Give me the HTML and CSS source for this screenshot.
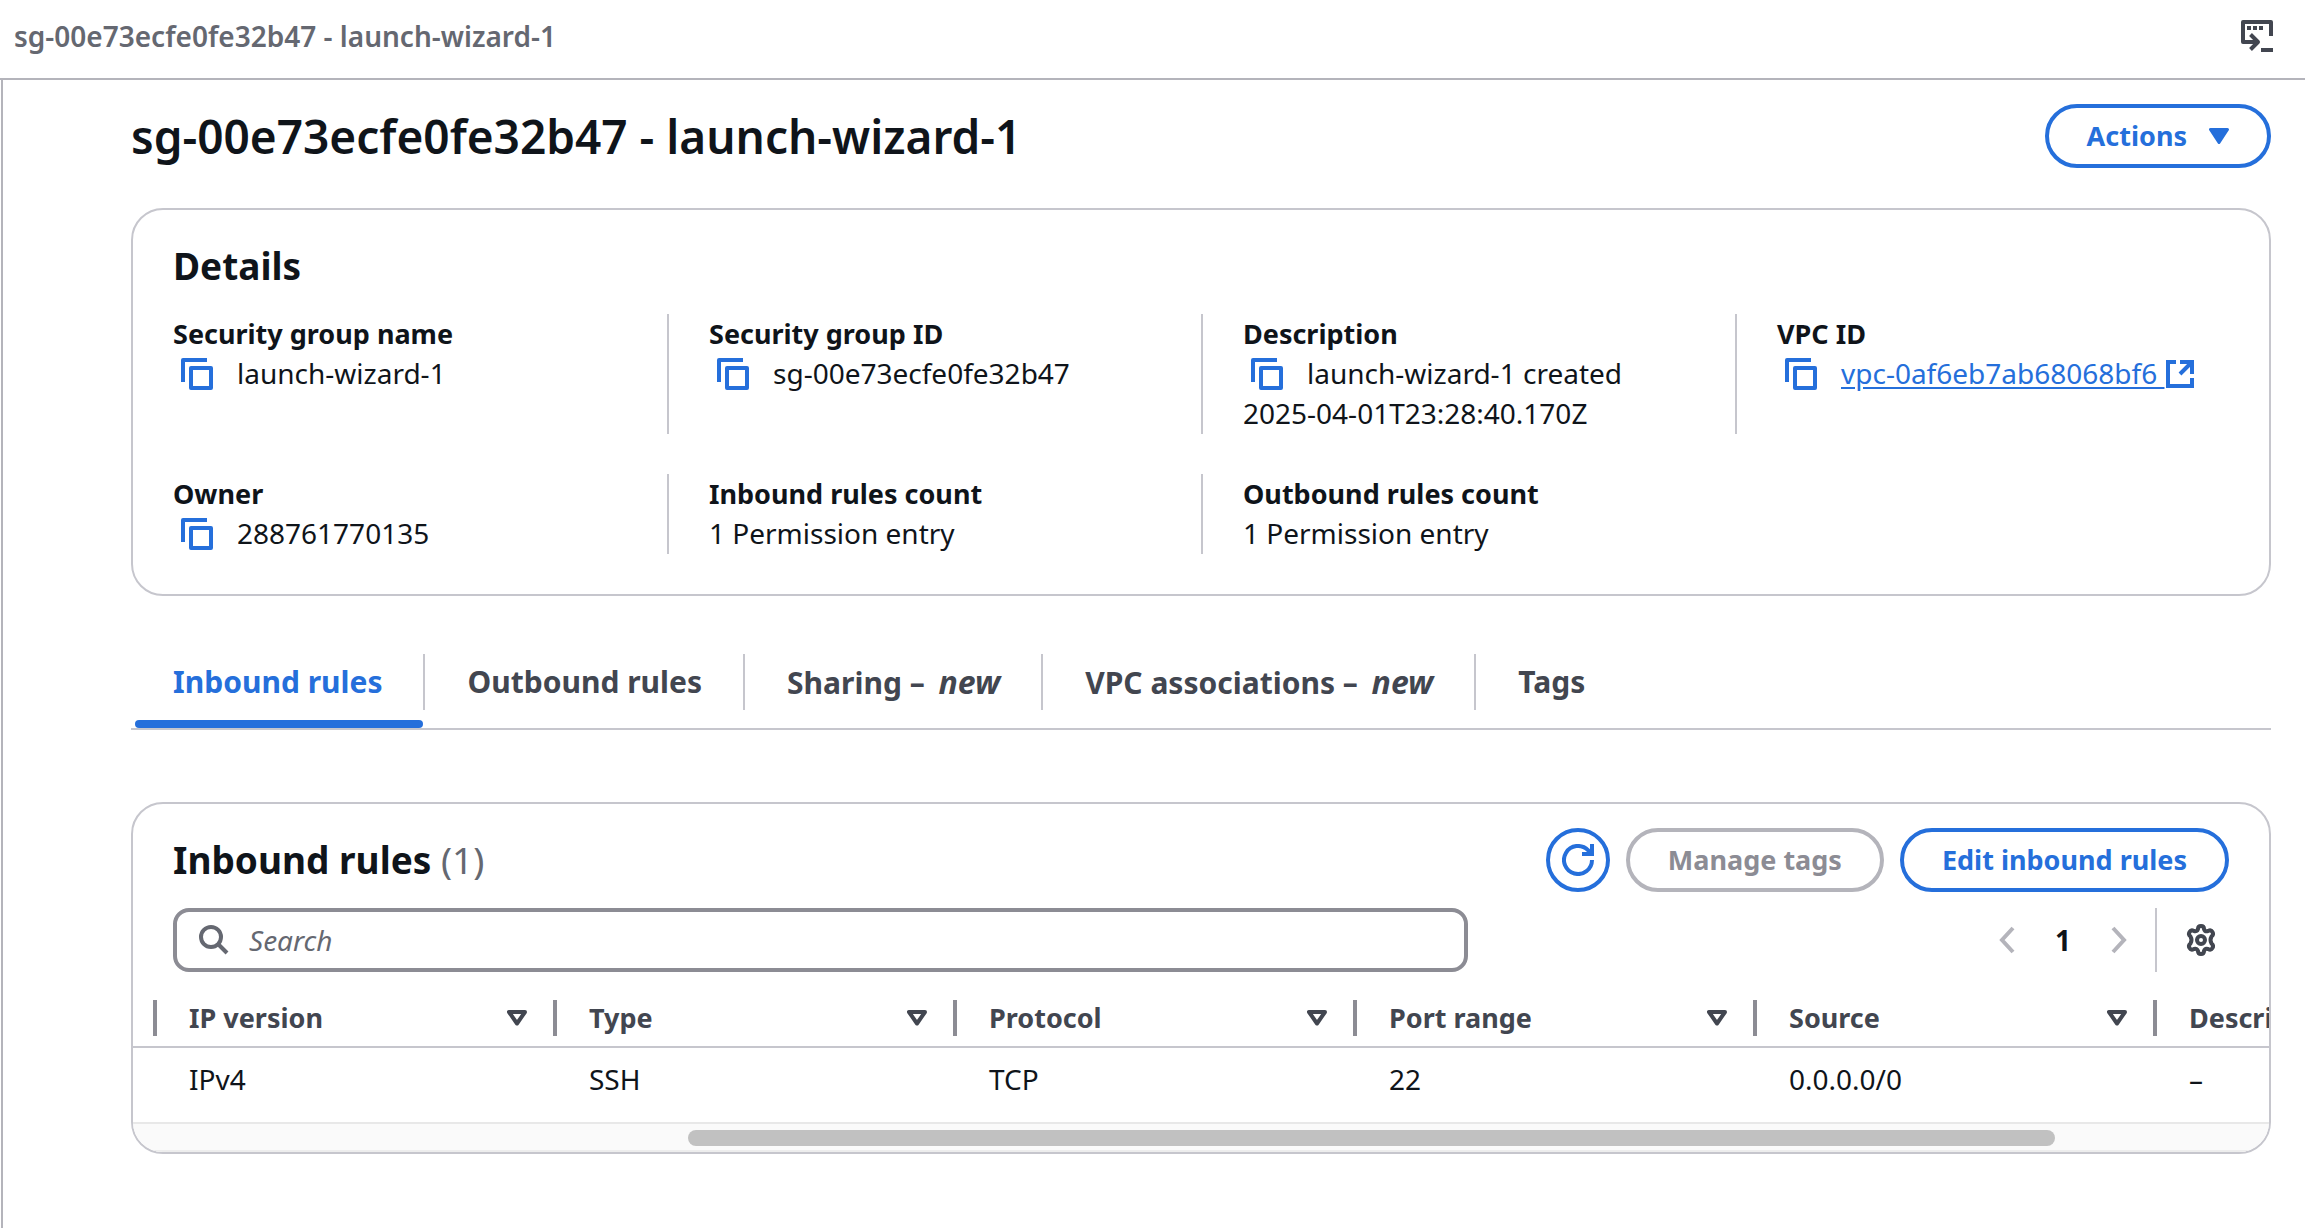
FILE: index.html
```html
<!DOCTYPE html>
<html lang="en">
<head>
<meta charset="utf-8">
<title>sg-00e73ecfe0fe32b47 - launch-wizard-1</title>
<link rel="stylesheet" href="styles.css">
</head>
<body>
<svg class="sprite" aria-hidden="true">
  <symbol id="copy" viewBox="0 0 32 32"><path d="M2 24V2h24" fill="none" stroke="currentColor" stroke-width="4" stroke-linejoin="round"/><rect x="10" y="10" width="20" height="20" fill="none" stroke="currentColor" stroke-width="4" stroke-linejoin="round"/></symbol>
  <symbol id="sort" viewBox="0 0 20 16"><path d="M2 2h16l-8 11.500z" fill="none" stroke="currentColor" stroke-width="4" stroke-linejoin="round"/></symbol>
</svg>

<header class="topbar">
  <span class="crumb">sg-00e73ecfe0fe32b47 - launch-wizard-1</span>
  <button class="icon-button" aria-label="Open CloudShell">
    <svg width="32" height="32" viewBox="0 0 32 32"><path d="M30 16V2H2v20h14M9.500 14.500L17 22l-7.500 7.500" fill="none" stroke="currentColor" stroke-width="4" stroke-linejoin="round"/><path d="M6 6h4v4H6zM12 6h4v4h-4zM18 6h4v4h-4zM20 28h12v4H20z" fill="currentColor"/></svg>
  </button>
</header>

<main class="content">
  <div class="page-head">
    <h1>sg-00e73ecfe0fe32b47 - launch-wizard-1</h1>
    <button class="btn">Actions
      <svg class="caret" width="20" height="16" viewBox="0 0 20 16"><path d="M1.500 1.500h17L10 14.500z" fill="currentColor" stroke="currentColor" stroke-width="3" stroke-linejoin="round"/></svg>
    </button>
  </div>

  <section class="card details">
    <h2>Details</h2>
    <dl class="facts">
      <div><dt>Security group name</dt><dd><button class="copy" aria-label="Copy name"><svg><use href="#copy"/></svg></button>launch-wizard-1</dd></div>
      <div><dt>Security group ID</dt><dd><button class="copy" aria-label="Copy ID"><svg><use href="#copy"/></svg></button>sg-00e73ecfe0fe32b47</dd></div>
      <div><dt>Description</dt><dd><button class="copy" aria-label="Copy description"><svg><use href="#copy"/></svg></button>launch-wizard-1 created 2025-04-01T23:28:40.170Z</dd></div>
      <div><dt>VPC ID</dt><dd><button class="copy" aria-label="Copy VPC ID"><svg><use href="#copy"/></svg></button><a href="#vpc">vpc-0af6eb7ab68068bf6 <svg class="external" width="28" height="28" viewBox="0 0 28 28"><path d="M10 2H2v24h24v-8M14 2h12v12M25 3L14 14" fill="none" stroke="currentColor" stroke-width="4"/></svg></a></dd></div>
      <div><dt>Owner</dt><dd><button class="copy" aria-label="Copy owner"><svg><use href="#copy"/></svg></button>288761770135</dd></div>
      <div><dt>Inbound rules count</dt><dd>1 Permission entry</dd></div>
      <div><dt>Outbound rules count</dt><dd>1 Permission entry</dd></div>
    </dl>
  </section>

  <nav class="tabs">
    <button class="tab active">Inbound rules</button>
    <button class="tab">Outbound rules</button>
    <button class="tab">Sharing – <i>new</i></button>
    <button class="tab">VPC associations – <i>new</i></button>
    <button class="tab">Tags</button>
  </nav>

  <section class="card rules">
    <div class="rules-head">
      <h2>Inbound rules <span class="count">(1)</span></h2>
      <div class="actions">
        <button class="btn round" aria-label="Refresh">
          <svg width="32" height="32" viewBox="0 0 32 32"><path d="M30 16a14 14 0 1 1-4-9.800L29 9.500M30 0v10H20" fill="none" stroke="currentColor" stroke-width="4"/></svg>
        </button>
        <button class="btn" disabled>Manage tags</button>
        <button class="btn">Edit inbound rules</button>
      </div>
    </div>
    <div class="tools">
      <label class="search">
        <svg width="30" height="30" viewBox="0 0 30 30"><circle cx="12" cy="12" r="10" fill="none" stroke="currentColor" stroke-width="4"/><path d="M19 19l9 9" stroke="currentColor" stroke-width="4"/></svg>
        <input type="search" placeholder="Search" aria-label="Search">
      </label>
      <div class="pager">
        <button class="page-step" aria-label="Previous page"><svg width="16" height="28" viewBox="0 0 16 28"><path d="M14 2L3 14l11 12" fill="none" stroke="currentColor" stroke-width="4"/></svg></button>
        <b class="page">1</b>
        <button class="page-step" aria-label="Next page"><svg width="16" height="28" viewBox="0 0 16 28"><path d="M2 2l11 12L2 26" fill="none" stroke="currentColor" stroke-width="4"/></svg></button>
        <button class="settings" aria-label="Preferences"><svg width="32" height="32" viewBox="0 0 32 32"><path d="M13 5q0-3 3-3q3 0 3 3q1 3 4 2q3-1.500 4.500 1q1.500 2.500-1 4.500q-2 3.500 0 7q2.500 2 1 4.500q-1.500 2.500-4.500 1q-3-1-4 2q0 3-3 3q-3 0-3-3q-1-3-4-2q-3 1.500-4.500-1q-1.500-2.500 1-4.500q2-3.500 0-7q-2.500-2-1-4.500q1.500-2.500 4.500-1q3 1 4-2z" fill="none" stroke="currentColor" stroke-width="4" stroke-linejoin="round"/><circle cx="16" cy="16" r="4" fill="none" stroke="currentColor" stroke-width="4"/></svg></button>
      </div>
    </div>
    <div class="table-view">
      <table>
        <thead><tr>
          <th><div>IP version<svg><use href="#sort"/></svg></div></th>
          <th><div>Type<svg><use href="#sort"/></svg></div></th>
          <th><div>Protocol<svg><use href="#sort"/></svg></div></th>
          <th><div>Port range<svg><use href="#sort"/></svg></div></th>
          <th><div>Source<svg><use href="#sort"/></svg></div></th>
          <th><div>Description<svg><use href="#sort"/></svg></div></th>
        </tr></thead>
        <tbody><tr><td>IPv4</td><td>SSH</td><td>TCP</td><td>22</td><td>0.0.0.0/0</td><td>–</td></tr></tbody>
      </table>
    </div>
    <div class="scrollbar"><div class="thumb"></div></div>
  </section>
</main>
</body>
</html>
```
FILE: styles.css
```css
* { box-sizing: border-box; }

:root {
  --blue: #256fdb;
  --ink: #0f141a;
  --slate: #424650;
  --muted: #656871;
  --line: #c6c6cd;
}

body {
  margin: 0;
  min-height: 100vh;
  display: flex;
  flex-direction: column;
  background: #fff;
  color: var(--ink);
  font: 28px/40px "Noto Sans", "Open Sans", sans-serif;
}

.sprite { display: none; }
svg { display: block; flex: none; }
h1, h2, dl, dd { margin: 0; }
h2, dt, th { font-weight: 700; }
dt, th { font-size: 27px; }
button { font: inherit; color: inherit; background: none; border: 0; padding: 0; }

.topbar {
  display: flex;
  justify-content: space-between;
  align-items: center;
  height: 80px;
  padding: 0 32px 6px 14px;
  border-bottom: 2px solid #b4b4bb;
}
.crumb { color: var(--muted); font-weight: 650; }
.icon-button { color: var(--slate); }

.content {
  flex: 1;
  margin-left: 1px;
  padding: 24px 34px 0 128px;
  border-left: 2px solid #b4b4bb;
}

.page-head {
  display: flex;
  justify-content: space-between;
  align-items: center;
  margin-bottom: 40px;
}
h1 { font-size: 46px; line-height: 60px; font-weight: 650; }
h2 { font-size: 37px; line-height: 48px; }

.btn {
  display: flex;
  align-items: center;
  justify-content: center;
  gap: 22px;
  height: 64px;
  padding: 0 38px;
  border: 4px solid var(--blue);
  border-radius: 32px;
  color: var(--blue);
  font-size: 27px;
  font-weight: 700;
}
.btn:disabled { border-color: #b4b4bb; color: #8c8c94; }
.btn.round { width: 64px; padding: 0; }

.card { border: 2px solid var(--line); border-radius: 32px; overflow: hidden; }

.details { padding: 32px 0 40px; }
.details h2 { padding: 0 40px; margin-bottom: 24px; }
.facts { display: grid; grid-template-columns: repeat(4, 1fr); row-gap: 40px; }
.facts > div { padding: 0 40px 1px; border-left: 2px solid var(--line); }
.facts > div:nth-child(4n + 1) { border-left-color: transparent; padding-left: 38px; }
dt { line-height: 39px; }
.copy { display: inline-block; vertical-align: -6px; margin: 0 24px 0 8px; color: var(--blue); line-height: 0; }
.copy svg { width: 32px; height: 32px; }
a { color: var(--blue); text-underline-offset: 3px; white-space: nowrap; }
.external { display: inline-block; vertical-align: -4px; margin-left: 2px; }

.tabs {
  display: flex;
  margin: 58px 0 72px;
  border-bottom: 2px solid var(--line);
}
.tab {
  position: relative;
  padding: 0 41px 0 42px;
  height: 56px;
  margin-bottom: 18px;
  border-right: 2px solid var(--line);
  color: var(--slate);
  font-size: 30px;
  font-weight: 700;
}
.tab i { margin-left: 6px; font-size: 32px; }
.tab:last-child { border: 0; }
.tab.active { color: var(--blue); }
.tab.active::after {
  content: "";
  position: absolute;
  left: 4px;
  right: 0;
  bottom: -18px;
  height: 8px;
  border-radius: 4px;
  background: var(--blue);
}

.rules-head { display: flex; justify-content: space-between; align-items: center; padding: 24px 40px 16px; }
.count { color: var(--muted); font-weight: 400; }
.actions { display: flex; gap: 16px; }

.tools { display: flex; justify-content: space-between; padding: 0 40px; }
.search {
  display: flex;
  align-items: center;
  gap: 20px;
  width: 63%;
  height: 64px;
  padding: 0 22px;
  border: 4px solid #8c8c94;
  border-radius: 16px;
  color: var(--muted);
}
.search input { flex: 1; min-width: 0; border: 0; outline: 0; padding: 0; font: inherit; background: none; }
.search input::placeholder { color: var(--muted); font-style: italic; opacity: 1; }

.pager { display: flex; align-items: center; }
.page-step { color: #b4b4bb; }
.page { width: 96px; text-align: center; }
.settings {
  display: flex;
  align-items: center;
  height: 64px;
  margin-left: 28px;
  padding: 0 12px 0 28px;
  border-left: 2px solid var(--line);
  color: var(--slate);
}

.table-view { overflow: hidden; }
table { width: 2420px; table-layout: fixed; border-collapse: separate; border-spacing: 0; text-align: left; }
th { width: 400px; padding: 28px 0 10px; color: var(--slate); border-bottom: 2px solid var(--line); }
th:first-child { width: 420px; padding-left: 20px; }
th div {
  display: flex;
  align-items: center;
  justify-content: space-between;
  height: 36px;
  padding: 0 26px 0 32px;
  border-left: 4px solid #8c8c94;
}
th svg { width: 20px; height: 16px; }
td { height: 74px; padding: 0 36px 12px; }
td:first-child { padding-left: 56px; }

.scrollbar {
  height: 30px;
  padding: 6px 0;
  background: #fafafa;
  border-top: 2px solid #e8e8e8;
  border-bottom: 2px solid #ededed;
}
.thumb { width: 64%; height: 16px; margin-left: 26%; border-radius: 8px; background: #c1c1c1; }
```
